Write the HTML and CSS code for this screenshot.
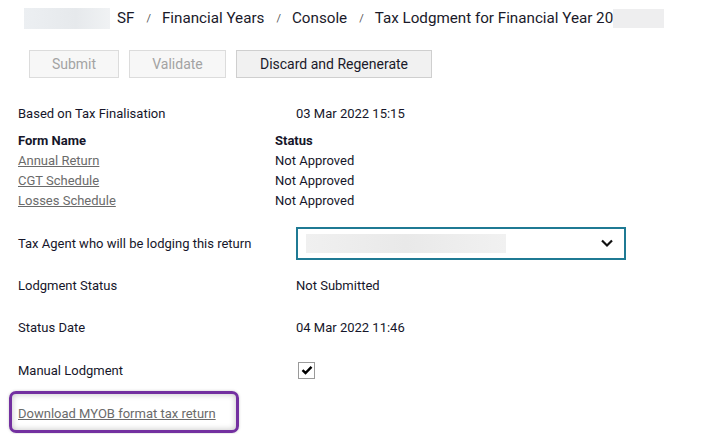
FILE: index.html
```html
<!DOCTYPE html>
<html>
<head>
<meta charset="utf-8">
<link rel="stylesheet" href="styles.css">
</head>
<body>
<nav class="crumbs">
  <span class="blur blur-org"></span>
  <span class="crumb">SF</span>
  <span class="sep">/</span>
  <span class="crumb">Financial Years</span>
  <span class="sep">/</span>
  <span class="crumb">Console</span>
  <span class="sep">/</span>
  <span class="crumb">Tax Lodgment for Financial Year 20</span>
  <span class="blur blur-year"></span>
</nav>

<div class="actions">
  <button class="btn btn-submit" disabled>Submit</button>
  <button class="btn btn-validate" disabled>Validate</button>
  <button class="btn btn-primary">Discard and Regenerate</button>
</div>

<div class="content">
  <div class="row-based">
    <span class="label">Based on Tax Finalisation</span>
    <span class="value">03 Mar 2022 15:15</span>
  </div>

  <div class="forms">
    <div class="fhead">Form Name</div><div class="fhead">Status</div>
    <a class="link" href="#">Annual Return</a><div>Not Approved</div>
    <a class="link" href="#">CGT Schedule</a><div>Not Approved</div>
    <a class="link" href="#">Losses Schedule</a><div>Not Approved</div>
  </div>

  <div class="field field-agent">
    <span class="label">Tax Agent who will be lodging this return</span>
    <div class="select">
      <span class="blur blur-agent"></span>
      <svg class="chev" width="14" height="10" viewBox="0 0 14 10"><path d="M2 2.5 L7 7.5 L12 2.5" fill="none" stroke="#111" stroke-width="2.2"/></svg>
    </div>
  </div>
  <div class="field">
    <span class="label">Lodgment Status</span>
    <span class="value">Not Submitted</span>
  </div>
  <div class="field field-tall">
    <span class="label">Status Date</span>
    <span class="value">04 Mar 2022 11:46</span>
  </div>
  <div class="field">
    <span class="label">Manual Lodgment</span>
    <span class="value"><span class="check"><svg width="12" height="10" viewBox="0 0 12 10"><path d="M1.5 5.2 L4.5 8 L10.5 1.8" fill="none" stroke="#000" stroke-width="2.4"/></svg></span></span>
  </div>
  <div class="download">
    <a class="link" href="#">Download MYOB format tax return</a>
  </div>
</div>
</body>
</html>
```
FILE: styles.css
```css
* { box-sizing: border-box; }
body {
  margin: 0;
  font-family: Roboto, "Noto Sans", sans-serif;
  font-size: 13px;
  color: #16162a;
  background: #fff;
  width: 712px;
  height: 434px;
  overflow: hidden;
}
.crumbs {
  display: flex;
  align-items: center;
  height: 36px;
  padding-left: 24px;
  font-size: 15.2px;
  color: #1a1a2a;
}
.blur {
  display: inline-block;
  background: linear-gradient(90deg, #eceff2, #e6e9ec 60%, #f0f2f4);
}
.blur-org { width: 86px; height: 21px; margin-right: 7px; }
.blur-year { width: 51px; height: 19px; background: #eeeeef; }
.sep {
  font-size: 11px;
  color: #555;
  margin: 0 11px 0 12px;
}
.actions {
  display: flex;
  gap: 10px;
  padding-left: 29px;
  margin-top: 14px;
}
.btn {
  height: 28px;
  font-family: Roboto, sans-serif;
  font-size: 14px;
  border: 1px solid #dcdcdc;
  background: #f7f7f7;
  color: #a3a3a3;
  padding: 0;
}
.btn-submit { width: 90px; }
.btn-validate { width: 97px; }
.btn-primary {
  width: 196px;
  background: #f1f1f1;
  border-color: #cfcfcf;
  color: #1a1a2a;
}
.content { padding-left: 18px; }
.row-based {
  display: flex;
  align-items: center;
  height: 20px;
  margin-top: 25px;
}
.row-based .label { width: 278px; }
.forms {
  display: grid;
  grid-template-columns: 257px auto;
  grid-auto-rows: 20px;
  align-items: center;
  margin-top: 7px;
}
.fhead { font-weight: bold; }
.link {
  color: #6b6b6b;
  text-decoration: underline;
}
.field {
  display: flex;
  align-items: center;
  height: 42px;
}
.field-agent { margin-top: 12px; }
.field-tall { height: 43px; }
.field .label { width: 278px; }
.select {
  width: 330px;
  height: 33px;
  border: 2px solid #1f7a94;
  display: flex;
  align-items: center;
  justify-content: space-between;
  padding: 0 10px 0 8px;
}
.blur-agent {
  width: 200px;
  height: 19px;
  background: linear-gradient(90deg, #f0f0f0, #e9e9e9 50%, #f1f1f1);
}
.check {
  display: inline-flex;
  align-items: center;
  justify-content: center;
  width: 17px;
  height: 17px;
  border: 1px solid #9a9a9a;
  margin-left: 2px;
}
.download {
  width: 230px;
  height: 42px;
  margin-left: -9px;
  margin-top: 0;
  border: 3px solid #7330a0;
  border-radius: 7px;
  box-shadow: inset 0 0 6px rgba(0,0,0,0.25), 0 0 3px rgba(0,0,0,0.2);
  display: flex;
  align-items: center;
  padding-left: 6px;
  padding-top: 2px;
}
```
